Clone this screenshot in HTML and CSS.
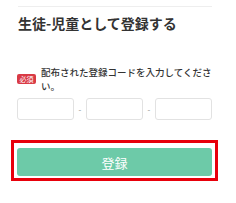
FILE: index.html
```html
<!doctype html>
<html lang="ja">

<head>
    <meta charset="utf-8">
    <meta name="viewport" content="width=device-width, initial-scale=1">
    <title>生徒-児童として登録する</title>

    <link rel="stylesheet" href="styles.css">

</head>

<body>
    <div class="page">
        <hr class="divider">
        <h1 class="title">生徒-児童として登録する</h1>

        <div class="field-label">
            <span class="required">必須</span>
            <p class="label-text">配布された登録コードを入力してください。</p>
        </div>

        <div class="code-inputs">
            <input class="code-box" type="text">
            <span class="dash">-</span>
            <input class="code-box" type="text">
            <span class="dash">-</span>
            <input class="code-box" type="text">
        </div>

        <div class="highlight">
            <button class="submit">登録</button>
        </div>
    </div>
</body>

</html>
```

FILE: styles.css
```css
body {
    margin: 0;
    background-color: #fff;
    color: #333;
    font-family: "Noto Sans CJK JP", "Noto Sans", sans-serif;
}

.page {
    width: 195px;
    padding-left: 17px;
}

.divider {
    margin: 6px 0 0 1px;
    border: 0;
    height: 1px;
    background-color: #eee;
}

.title {
    margin: 7px 0 0 1px;
    font-size: 14px;
    line-height: 18px;
    font-weight: 700;
    color: #333;
}

.field-label {
    display: flex;
    align-items: center;
    gap: 5px;
    margin-top: 33px;
}

.required {
    flex-shrink: 0;
    width: 19px;
    height: 10px;
    border-radius: 2px;
    background-color: #d93a45;
    color: #fff;
    font-size: 7px;
    line-height: 10px;
    text-align: center;
}

.label-text {
    margin: 0;
    font-size: 9.5px;
    line-height: 14px;
    font-weight: 500;
    color: #333;
}

.code-inputs {
    display: flex;
    align-items: center;
    margin-top: 5px;
}

.code-box {
    flex: 1;
    min-width: 0;
    height: 22px;
    box-sizing: border-box;
    border: 1px solid #e2e2e2;
    border-radius: 3px;
    padding: 0;
}

.dash {
    width: 12px;
    text-align: center;
    font-size: 8px;
    color: #888;
}

.highlight {
    margin: 20px 0 0 -6px;
    width: 198px;
    border: 3px solid #e8000b;
    padding: 5px 0 2px 3px;
}

.submit {
    display: block;
    width: 195px;
    height: 28px;
    border: 0;
    border-radius: 3px;
    background-color: #6dcaa8;
    color: #fff;
    font-family: inherit;
    font-size: 13px;
}
```
